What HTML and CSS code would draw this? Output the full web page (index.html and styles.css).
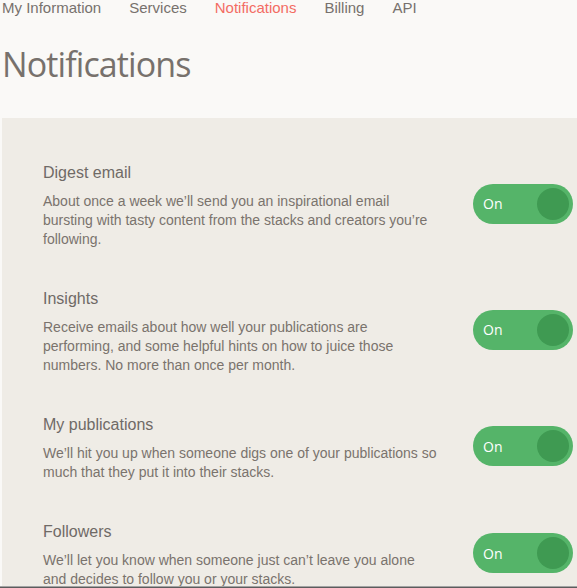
FILE: index.html
```html
<!DOCTYPE html>
<html>
<head>
<meta charset="utf-8">
<link rel="stylesheet" href="styles.css">
</head>
<body>
<nav class="tabs">
  <a class="tab">My Information</a>
  <a class="tab">Services</a>
  <a class="tab active">Notifications</a>
  <a class="tab">Billing</a>
  <a class="tab">API</a>
</nav>
<h1 class="title">Notifications</h1>
<section class="panel">
  <div class="row">
    <div class="text">
      <h2 class="heading">Digest email</h2>
      <p class="desc">About once a week we’ll send you an inspirational email bursting with tasty content from the stacks and creators you’re following.</p>
    </div>
    <div class="toggle"><span class="label">On</span><span class="knob"></span></div>
  </div>
  <div class="row">
    <div class="text">
      <h2 class="heading">Insights</h2>
      <p class="desc">Receive emails about how well your publications are performing, and some helpful hints on how to juice those numbers. No more than once per month.</p>
    </div>
    <div class="toggle"><span class="label">On</span><span class="knob"></span></div>
  </div>
  <div class="row">
    <div class="text">
      <h2 class="heading">My publications</h2>
      <p class="desc">We’ll hit you up when someone digs one of your publications so much that they put it into their stacks.</p>
    </div>
    <div class="toggle"><span class="label">On</span><span class="knob"></span></div>
  </div>
  <div class="row">
    <div class="text">
      <h2 class="heading">Followers</h2>
      <p class="desc">We’ll let you know when someone just can’t leave you alone and decides to follow you or your stacks.</p>
    </div>
    <div class="toggle"><span class="label">On</span><span class="knob"></span></div>
  </div>
</section>
<div class="edge"></div>
</body>
</html>
```
FILE: styles.css
```css
html, body {
  margin: 0;
  padding: 0;
  background: #faf9f7;
  overflow: hidden;
}
body {
  font-family: "Liberation Sans", Arial, sans-serif;
  color: #7a736d;
}
.tabs {
  display: flex;
  gap: 28px;
  padding-left: 2px;
  margin-top: -1px;
  font-size: 15px;
  line-height: 17px;
}
.tab {
  color: #77716d;
}
.tab.active {
  color: #f36c63;
}
.title {
  margin: 25px 0 0 2px;
  font-family: "Open Sans", sans-serif;
  font-weight: 400;
  font-size: 34px;
  letter-spacing: -0.9px;
  line-height: 46px;
  color: #77716c;
}
.panel {
  margin: 31px 0 0 2px;
  background: #efece6;
  padding: 45px 4px 40px 41px;
  display: flex;
  flex-direction: column;
  gap: 40px;
}
.row {
  display: flex;
  justify-content: space-between;
  align-items: center;
}
.text {
  width: 397px;
}
.heading {
  margin: 0 0 9px;
  font-weight: 400;
  font-size: 16px;
  line-height: 20px;
  color: #6f6a66;
}
.desc {
  margin: 0;
  font-size: 14px;
  line-height: 19px;
  color: #7a736d;
}
.toggle {
  width: 100px;
  height: 40px;
  margin-top: -5px;
  border-radius: 20px;
  background: #55b469;
  display: flex;
  align-items: center;
  justify-content: space-between;
  padding: 0 4px 0 10px;
  box-sizing: border-box;
  flex-shrink: 0;
}
.label {
  font-family: "Open Sans", sans-serif;
  font-size: 14px;
  color: #ffffff;
}
.knob {
  width: 32px;
  height: 32px;
  border-radius: 50%;
  background: #3f9a52;
}
.edge {
  position: fixed;
  left: 0;
  right: 0;
  bottom: 0;
  height: 1px;
  border-top: 1px solid #a3a3a3;
  background: #5c5c5c;
}
```
